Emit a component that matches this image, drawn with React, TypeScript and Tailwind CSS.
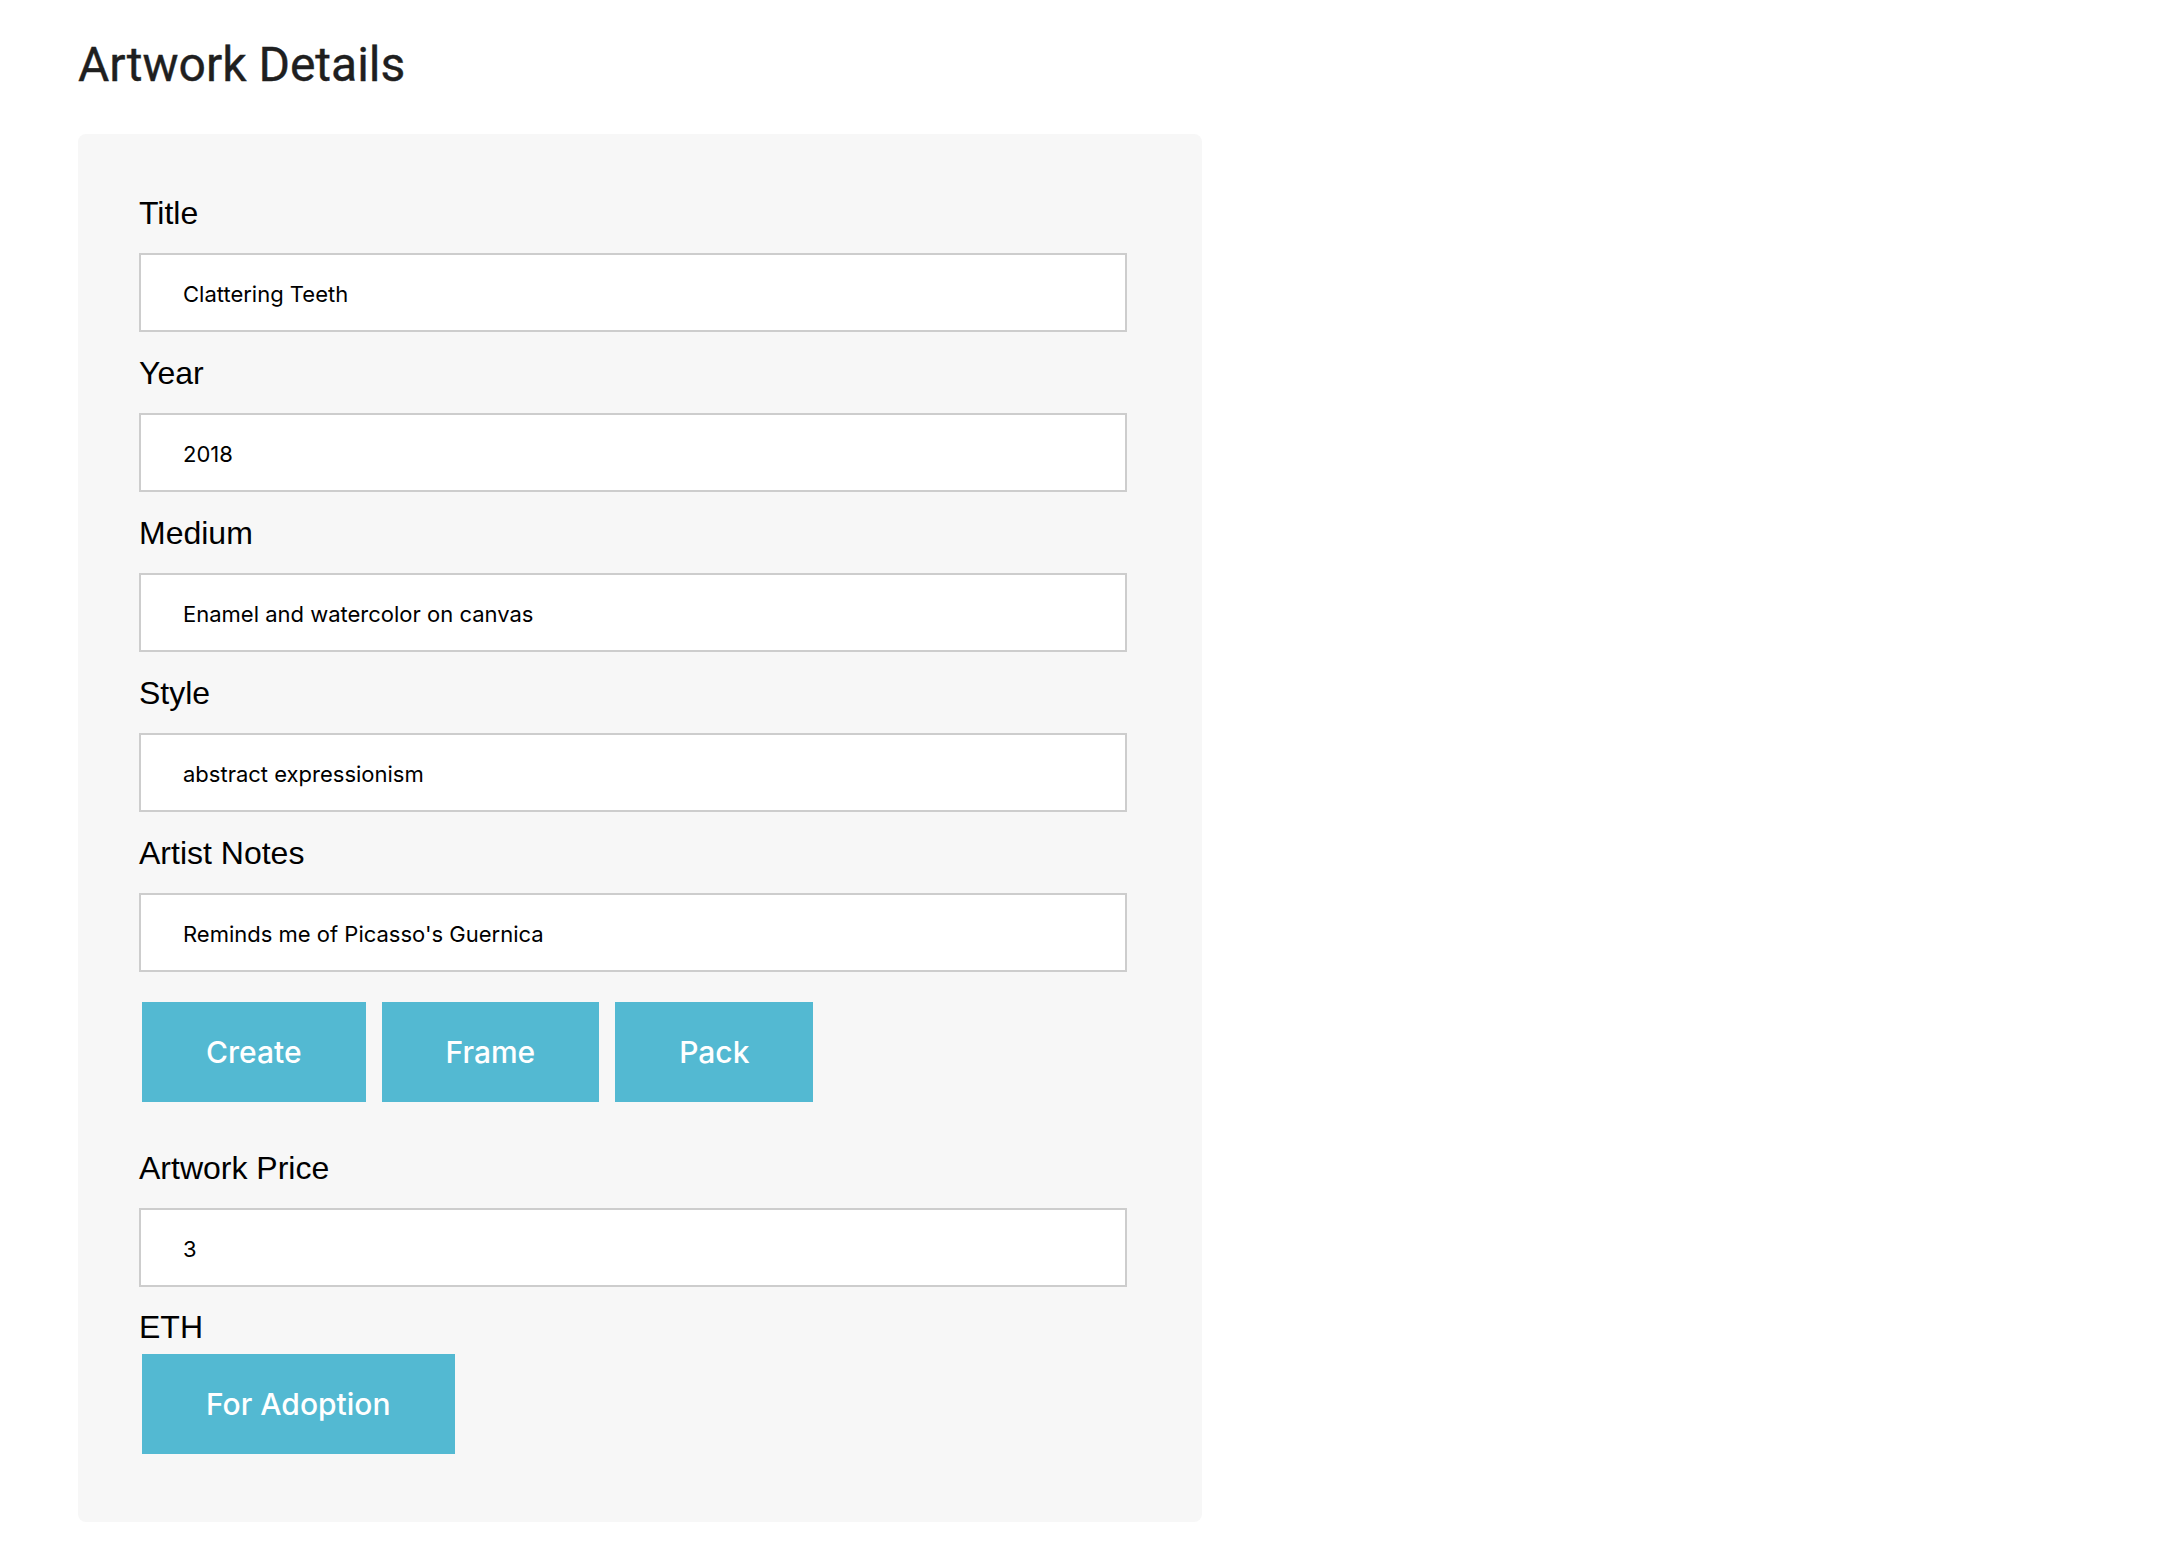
import React from 'react';

const fields = [
  { label: 'Title', value: 'Clattering Teeth' },
  { label: 'Year', value: '2018' },
  { label: 'Medium', value: 'Enamel and watercolor on canvas' },
  { label: 'Style', value: 'abstract expressionism' },
  { label: 'Artist Notes', value: "Reminds me of Picasso's Guernica" },
];

function Field({ label, value, className = '' }: { label: string; value: string; className?: string }) {
  return (
    <div className={className}>
      <label className="block h-10 text-[32px] leading-[38px] text-black">{label}</label>
      <input
        readOnly
        value={value}
        className="mt-[19px] block h-[79px] w-[988px] border-2 border-[#cdcdcd] bg-white pl-[42px] pt-[3px] font-['Inter',sans-serif] text-[22px] text-black outline-none"
      />
    </div>
  );
}

function ActionButton({ children }: { children: React.ReactNode }) {
  return (
    <button className="h-[100px] bg-[#53b9d2] px-16 font-['Inter',sans-serif] text-[30px] font-medium text-white">
      {children}
    </button>
  );
}

function App() {
  return (
    <div className="min-h-screen bg-white pl-[78px] pt-[37px] font-['Liberation_Sans',Arial,sans-serif]">
      <h1 className="font-['Roboto',sans-serif] text-[48px] leading-[56px] text-[#1f1f1f] [-webkit-text-stroke:0.4px_#1f1f1f]">
        Artwork Details
      </h1>

      <div className="mt-[41px] w-[1124px] rounded-lg bg-[#f7f7f7] pb-[68px] pl-[61px] pt-[60px]">
        <div className="flex flex-col gap-[22px]">
          {fields.map((f) => (
            <Field key={f.label} label={f.label} value={f.value} />
          ))}
        </div>

        <div className="ml-[3px] mt-[30px] flex gap-4">
          <ActionButton>Create</ActionButton>
          <ActionButton>Frame</ActionButton>
          <ActionButton>Pack</ActionButton>
        </div>

        <Field label="Artwork Price" value="3" className="mt-[47px]" />

        <div className="mt-[21px] h-10 text-[32px] leading-[38px] text-black">ETH</div>
        <div className="ml-[3px] mt-[6px] flex">
          <ActionButton>For Adoption</ActionButton>
        </div>
      </div>
    </div>
  );
}

export default App;
